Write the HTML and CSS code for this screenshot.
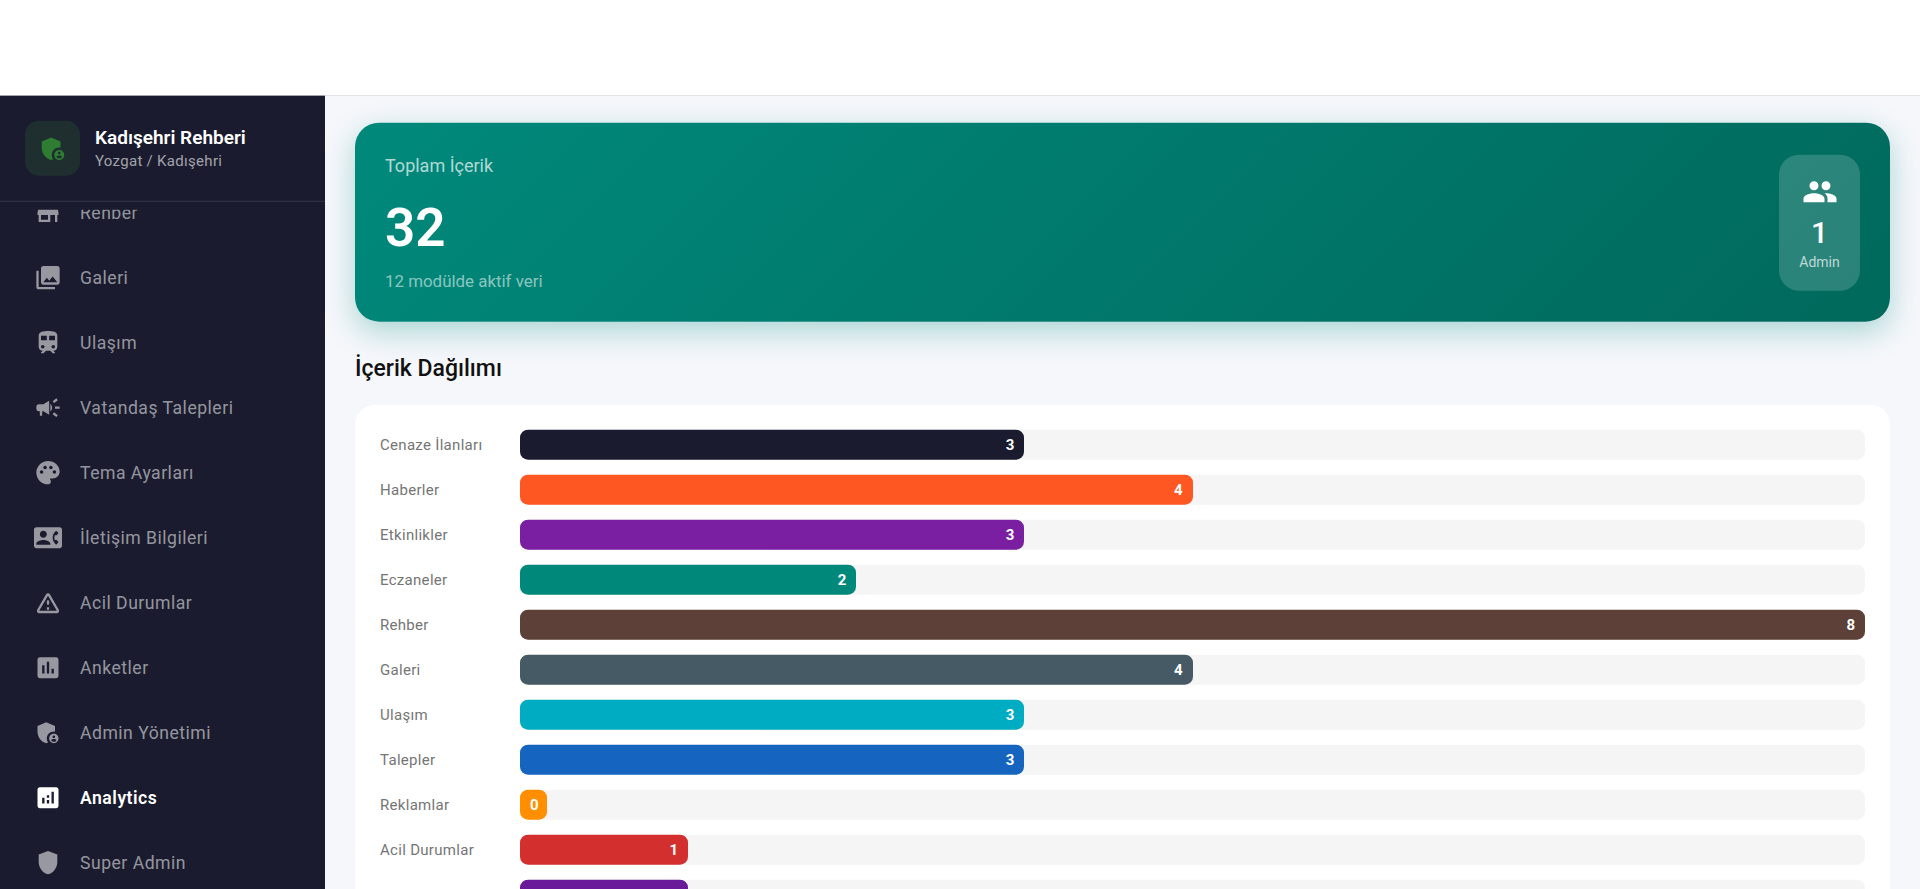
FILE: index.html
```html
<!DOCTYPE html>
<html lang="tr">
<head>
    <meta charset="UTF-8">
    <meta name="viewport" content="width=device-width, initial-scale=1.0">
    <title>Analytics</title>
    <link rel="stylesheet" href="styles.css">
</head>
<body>
    <header class="topbar"></header>

    <div class="layout">
        <aside class="sidebar">
            <div class="brand">
                <div class="brand-logo">
                    <svg viewBox="0 0 24 24"><path d="M17 11c.34 0 .67.04 1 .09V6.27L10.5 3 3 6.27v4.91c0 4.54 3.2 8.79 7.5 9.82.55-.13 1.08-.32 1.6-.55-.69-.98-1.1-2.17-1.1-3.45 0-3.31 2.69-6 6-6z"/><path d="M17 13c-2.21 0-4 1.79-4 4s1.79 4 4 4 4-1.79 4-4-1.79-4-4-4zm0 1.38c.62 0 1.12.51 1.12 1.12s-.51 1.12-1.12 1.12-1.12-.51-1.12-1.12.5-1.12 1.12-1.12zm0 5.37c-.93 0-1.74-.46-2.24-1.17.05-.72 1.51-1.08 2.24-1.08s2.19.36 2.24 1.08c-.5.71-1.31 1.17-2.24 1.17z"/></svg>
                </div>
                <div>
                    <div class="brand-name">Kadışehri Rehberi</div>
                    <div class="brand-place">Yozgat / Kadışehri</div>
                </div>
            </div>
            <nav class="nav">
                <div class="nav-list">
                    <a class="nav-item">
                        <svg viewBox="0 0 24 24"><path d="M20 4H4v2h16V4zm1 10v-2l-1-5H4l-1 5v2h1v6h10v-6h4v6h2v-6h1zm-9 4H6v-4h6v4z"/></svg>
                        Rehber
                    </a>
                    <a class="nav-item">
                        <svg viewBox="0 0 24 24"><path d="M22 16V4c0-1.1-.9-2-2-2H8c-1.1 0-2 .9-2 2v12c0 1.1.9 2 2 2h12c1.1 0 2-.9 2-2zm-11-4l2.03 2.71L16 11l4 5H8l3-4zM2 6v14c0 1.1.9 2 2 2h14v-2H4V6H2z"/></svg>
                        Galeri
                    </a>
                    <a class="nav-item">
                        <svg viewBox="0 0 24 24"><path d="M12 2c-4 0-8 .5-8 4v9.5C4 17.43 5.57 19 7.5 19L6 20.5v.5h2.23l2-2H14l2 2h2v-.5L16.5 19c1.93 0 3.5-1.57 3.5-3.5V6c0-3.5-3.58-4-8-4zM7.5 17c-.83 0-1.5-.67-1.5-1.5S6.67 14 7.5 14s1.5.67 1.5 1.5S8.33 17 7.5 17zm3.5-7H6V6h5v4zm2 0V6h5v4h-5zm3.5 7c-.83 0-1.5-.67-1.5-1.5s.67-1.5 1.5-1.5 1.5.67 1.5 1.5-.67 1.5-1.5 1.5z"/></svg>
                        Ulaşım
                    </a>
                    <a class="nav-item">
                        <svg viewBox="0 0 24 24"><path d="M18 11v2h4v-2h-4zm-2 6.61c.96.71 2.21 1.65 3.2 2.39.4-.53.8-1.07 1.2-1.6-.99-.74-2.24-1.68-3.2-2.4-.4.54-.8 1.08-1.2 1.61zM20.4 5.6c-.4-.53-.8-1.07-1.2-1.6-.99.74-2.24 1.68-3.2 2.4.4.53.8 1.07 1.2 1.6.96-.72 2.21-1.65 3.2-2.4zM4 9c-1.1 0-2 .9-2 2v2c0 1.1.9 2 2 2h1v4h2v-4h1l5 3V6L8 9H4zm11.5 3c0-1.33-.58-2.53-1.5-3.35v6.69c.92-.81 1.5-2.01 1.5-3.34z"/></svg>
                        Vatandaş Talepleri
                    </a>
                    <a class="nav-item">
                        <svg viewBox="0 0 24 24"><path d="M12 2C6.49 2 2 6.49 2 12s4.49 10 10 10c1.38 0 2.5-1.12 2.5-2.5 0-.61-.23-1.2-.64-1.67-.08-.1-.13-.21-.13-.33 0-.28.22-.5.5-.5H16c3.31 0 6-2.69 6-6 0-4.96-4.49-9-10-9zm5.5 11c-.83 0-1.5-.67-1.5-1.5s.67-1.5 1.5-1.5 1.5.67 1.5 1.5-.67 1.5-1.5 1.5zm-3-4c-.83 0-1.5-.67-1.5-1.5S13.67 6 14.5 6s1.5.67 1.5 1.5S15.33 9 14.5 9zM5 11.5c0-.83.67-1.5 1.5-1.5s1.5.67 1.5 1.5S7.33 13 6.5 13 5 12.33 5 11.5zm6-4c0 .83-.67 1.5-1.5 1.5S8 8.33 8 7.5 8.67 6 9.5 6s1.5.67 1.5 1.5z"/></svg>
                        Tema Ayarları
                    </a>
                    <a class="nav-item">
                        <svg viewBox="0 0 24 24"><path d="M22 3H2C.9 3 0 3.9 0 5v14c0 1.1.9 2 2 2h20c1.1 0 1.99-.9 1.99-2L24 5c0-1.1-.9-2-2-2zM8 6c1.66 0 3 1.34 3 3s-1.34 3-3 3-3-1.34-3-3 1.34-3 3-3zm6 12H2v-1c0-2 4-3.1 6-3.1s6 1.1 6 3.1v1zm3.85-4h1.64L21 16l-1.99 1.99c-1.31-.98-2.28-2.38-2.73-3.99-.18-.64-.28-1.31-.28-2s.1-1.36.28-2c.45-1.62 1.42-3.01 2.73-3.99L21 8l-1.51 2h-1.64c-.22.63-.35 1.3-.35 2s.13 1.37.35 2z"/></svg>
                        İletişim Bilgileri
                    </a>
                    <a class="nav-item">
                        <svg viewBox="0 0 24 24"><path d="M12 5.99L19.53 19H4.47L12 5.99M2.74 18c-.77 1.33.19 3 1.73 3h15.06c1.54 0 2.5-1.67 1.73-3L13.73 4.99c-.77-1.33-2.69-1.33-3.46 0L2.74 18zM11 11v2c0 .55.45 1 1 1s1-.45 1-1v-2c0-.55-.45-1-1-1s-1 .45-1 1zm0 5h2v2h-2z"/></svg>
                        Acil Durumlar
                    </a>
                    <a class="nav-item">
                        <svg viewBox="0 0 24 24"><path d="M19 3H5c-1.1 0-2 .9-2 2v14c0 1.1.9 2 2 2h14c1.1 0 2-.9 2-2V5c0-1.1-.9-2-2-2zM9 17H7v-7h2v7zm4 0h-2V7h2v10zm4 0h-2v-4h2v4z"/></svg>
                        Anketler
                    </a>
                    <a class="nav-item">
                        <svg viewBox="0 0 24 24"><path d="M17 11c.34 0 .67.04 1 .09V6.27L10.5 3 3 6.27v4.91c0 4.54 3.2 8.79 7.5 9.82.55-.13 1.08-.32 1.6-.55-.69-.98-1.1-2.17-1.1-3.45 0-3.31 2.69-6 6-6z"/><path d="M17 13c-2.21 0-4 1.79-4 4s1.79 4 4 4 4-1.79 4-4-1.79-4-4-4zm0 1.38c.62 0 1.12.51 1.12 1.12s-.51 1.12-1.12 1.12-1.12-.51-1.12-1.12.5-1.12 1.12-1.12zm0 5.37c-.93 0-1.74-.46-2.24-1.17.05-.72 1.51-1.08 2.24-1.08s2.19.36 2.24 1.08c-.5.71-1.31 1.17-2.24 1.17z"/></svg>
                        Admin Yönetimi
                    </a>
                    <a class="nav-item active">
                        <svg viewBox="0 0 24 24"><path d="M19 3H5c-1.1 0-2 .9-2 2v14c0 1.1.9 2 2 2h14c1.1 0 2-.9 2-2V5c0-1.1-.9-2-2-2zM9 17H7v-5h2v5zm4 0h-2v-3h2v3zm0-5h-2v-2h2v2zm4 5h-2V7h2v10z"/></svg>
                        Analytics
                    </a>
                    <a class="nav-item">
                        <svg viewBox="0 0 24 24"><path d="M12 2 4 5v6.09c0 5.05 3.41 9.76 8 10.91 4.59-1.15 8-5.86 8-10.91V5l-8-3z"/></svg>
                        Super Admin
                    </a>
                </div>
            </nav>
        </aside>

        <main class="content">
            <section class="hero">
                <div>
                    <div class="hero-label">Toplam İçerik</div>
                    <div class="hero-total">32</div>
                    <div class="hero-note">12 modülde aktif veri</div>
                </div>
                <div class="hero-stat">
                    <svg viewBox="0 0 24 24"><path d="M16 11c1.66 0 2.99-1.34 2.99-3S17.66 5 16 5c-1.66 0-3 1.34-3 3s1.34 3 3 3zm-8 0c1.66 0 2.99-1.34 2.99-3S9.66 5 8 5C6.34 5 5 6.34 5 8s1.34 3 3 3zm0 2c-2.33 0-7 1.17-7 3.5V19h14v-2.5c0-2.33-4.67-3.5-7-3.5zm8 0c-.29 0-.62.02-.97.05 1.16.84 1.97 1.97 1.97 3.45V19h6v-2.5c0-2.33-4.67-3.5-7-3.5z"/></svg>
                    <div class="hero-stat-value">1</div>
                    <div class="hero-stat-label">Admin</div>
                </div>
            </section>

            <h2 class="section-title">İçerik Dağılımı</h2>

            <section class="chart-card">
                <div class="bar-row">
                    <span class="bar-label">Cenaze İlanları</span>
                    <div class="bar-track"><div class="bar-fill fill-navy" style="width: 37.5%">3</div></div>
                </div>
                <div class="bar-row">
                    <span class="bar-label">Haberler</span>
                    <div class="bar-track"><div class="bar-fill fill-orange" style="width: 50%">4</div></div>
                </div>
                <div class="bar-row">
                    <span class="bar-label">Etkinlikler</span>
                    <div class="bar-track"><div class="bar-fill fill-purple" style="width: 37.5%">3</div></div>
                </div>
                <div class="bar-row">
                    <span class="bar-label">Eczaneler</span>
                    <div class="bar-track"><div class="bar-fill fill-teal" style="width: 25%">2</div></div>
                </div>
                <div class="bar-row">
                    <span class="bar-label">Rehber</span>
                    <div class="bar-track"><div class="bar-fill fill-brown" style="width: 100%">8</div></div>
                </div>
                <div class="bar-row">
                    <span class="bar-label">Galeri</span>
                    <div class="bar-track"><div class="bar-fill fill-slate" style="width: 50%">4</div></div>
                </div>
                <div class="bar-row">
                    <span class="bar-label">Ulaşım</span>
                    <div class="bar-track"><div class="bar-fill fill-cyan" style="width: 37.5%">3</div></div>
                </div>
                <div class="bar-row">
                    <span class="bar-label">Talepler</span>
                    <div class="bar-track"><div class="bar-fill fill-blue" style="width: 37.5%">3</div></div>
                </div>
                <div class="bar-row">
                    <span class="bar-label">Reklamlar</span>
                    <div class="bar-track"><div class="bar-fill fill-amber" style="width: 0%">0</div></div>
                </div>
                <div class="bar-row">
                    <span class="bar-label">Acil Durumlar</span>
                    <div class="bar-track"><div class="bar-fill fill-red" style="width: 12.5%">1</div></div>
                </div>
                <div class="bar-row">
                    <span class="bar-label">Anketler</span>
                    <div class="bar-track"><div class="bar-fill fill-violet" style="width: 12.5%">1</div></div>
                </div>
            </section>
        </main>
    </div>
</body>
</html>
```

FILE: styles.css
```css
* {
  box-sizing: border-box;
}
html, body {
  height: 100%;
}
body {
  margin: 0;
  overflow: hidden;
  font-family: Roboto, sans-serif;
  background-color: #f5f7fb;
  display: flex;
  flex-direction: column;
}
.topbar {
  height: 96px;
  flex-shrink: 0;
  background-color: #fff;
  border-bottom: 1px solid #e0e3e8;
}
.layout {
  flex: 1;
  min-height: 0;
  margin-bottom: -2px;
  display: flex;
  transform: translateY(-0.3px);
}

/* sidebar */
.sidebar {
  width: 325px;
  flex-shrink: 0;
  background-color: #1a1b2e;
  display: flex;
  flex-direction: column;
}
.brand {
  height: 106px;
  flex-shrink: 0;
  padding: 0 25px;
  display: flex;
  align-items: center;
  gap: 15px;
  border-bottom: 1px solid rgba(255, 255, 255, 0.12);
}
.brand-logo {
  width: 55px;
  height: 55px;
  border-radius: 14px;
  background-color: #1f2f30;
  display: flex;
  align-items: center;
  justify-content: center;
}
.brand-logo svg {
  width: 30px;
  height: 30px;
  fill: #2e7d32;
}
.brand-name {
  color: #fff;
  font-size: 19px;
  font-weight: 600;
  line-height: 24px;
}
.brand-place {
  margin-top: 1px;
  color: rgba(255, 255, 255, 0.6);
  font-size: 15px;
  line-height: 20px;
  letter-spacing: 0.3px;
}
.nav {
  flex: 1;
  min-height: 0;
  margin-top: 8px;
  overflow: hidden;
}
.nav-list {
  margin-top: -30px;
}
.nav-item {
  height: 65px;
  padding-left: 34px;
  display: flex;
  align-items: center;
  gap: 18px;
  color: rgba(255, 255, 255, 0.55);
  font-size: 17.6px;
  letter-spacing: 0.5px;
}
.nav-item svg {
  width: 28px;
  height: 28px;
  flex-shrink: 0;
  fill: currentColor;
}
.nav-item.active {
  color: #fff;
  font-weight: 600;
}

/* main column */
.content {
  flex: 1;
  min-width: 0;
  overflow: hidden;
  padding: 27px 30px 0;
}
.hero {
  height: 199px;
  padding: 0 30px;
  border-radius: 24px;
  background: linear-gradient(135deg, #00897b, #00695c);
  box-shadow: 0 10px 30px rgba(0, 137, 123, 0.3);
  display: flex;
  align-items: center;
  justify-content: space-between;
}
.hero-label {
  color: rgba(255, 255, 255, 0.7);
  font-size: 18px;
  line-height: 24px;
}
.hero-total {
  color: #fff;
  font-size: 53px;
  font-weight: 600;
  line-height: 66px;
  margin: 17px 0 9px;
}
.hero-note {
  color: rgba(255, 255, 255, 0.55);
  font-size: 16.9px;
  line-height: 22px;
}
.hero-stat {
  width: 81px;
  height: 136px;
  padding-top: 19px;
  border-radius: 20px;
  background-color: rgba(255, 255, 255, 0.17);
  display: flex;
  flex-direction: column;
  align-items: center;
}
.hero-stat svg {
  width: 36px;
  height: 36px;
  margin-bottom: 5px;
  flex-shrink: 0;
  fill: #fff;
}
.hero-stat-value {
  color: #fff;
  font-size: 30px;
  font-weight: 500;
  line-height: 36px;
}
.hero-stat-label {
  color: rgba(255, 255, 255, 0.7);
  font-size: 14px;
  line-height: 22px;
}
.section-title {
  margin: 32px 0 21px;
  color: #111;
  font-size: 23px;
  font-weight: 500;
  line-height: 30px;
}
.chart-card {
  padding: 25px;
  border-radius: 20px;
  background-color: #fff;
  display: flex;
  flex-direction: column;
  gap: 15px;
}
.bar-row {
  display: flex;
  align-items: center;
}
.bar-label {
  width: 140px;
  flex-shrink: 0;
  color: #757575;
  font-size: 15px;
  letter-spacing: 0.3px;
}
.bar-track {
  flex: 1;
  height: 30px;
  border-radius: 8px;
  background-color: #f5f5f5;
}
.bar-fill {
  height: 30px;
  min-width: 27px;
  padding: 0 10px;
  border-radius: 8px;
  color: #fff;
  font-size: 15px;
  font-weight: 700;
  line-height: 30px;
  text-align: right;
}
.fill-navy { background-color: #1a1b2e; }
.fill-orange { background-color: #ff5722; }
.fill-purple { background-color: #7b1fa2; }
.fill-teal { background-color: #00897b; }
.fill-brown { background-color: #5d4037; }
.fill-slate { background-color: #455a64; }
.fill-cyan { background-color: #00acc1; }
.fill-blue { background-color: #1565c0; }
.fill-amber { background-color: #ff8f00; }
.fill-red { background-color: #d32f2f; }
.fill-violet { background-color: #6a1b9a; }
```
